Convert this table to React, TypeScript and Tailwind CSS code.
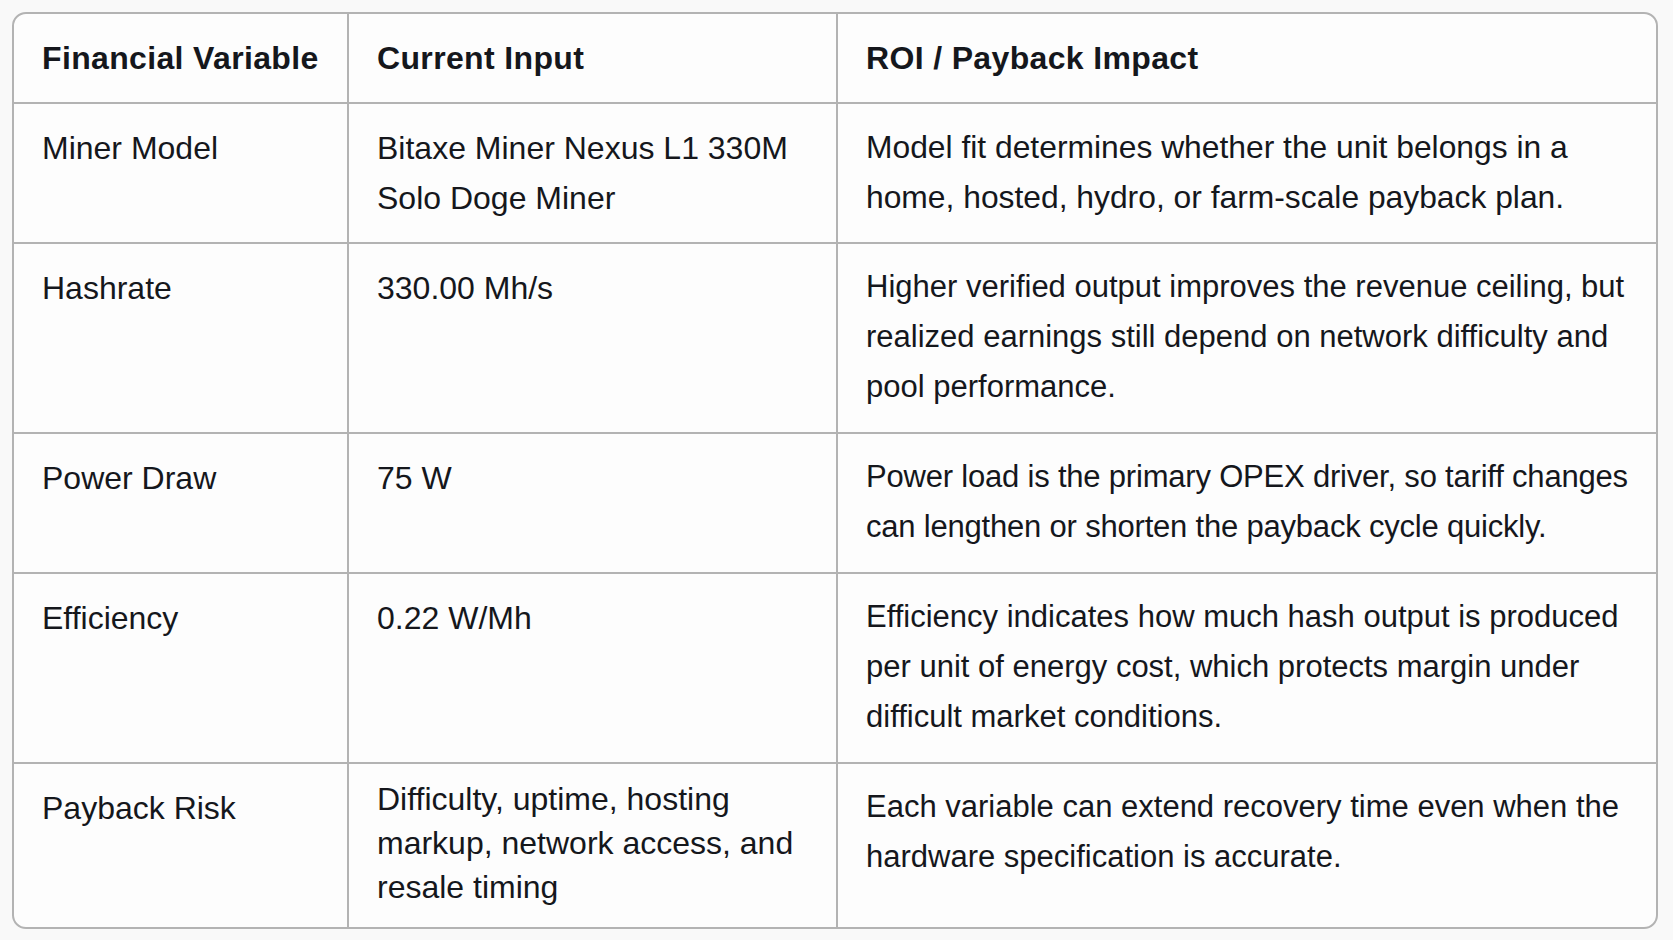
import React from "react";

type Row = {
  label: string;
  input: string[];
  impact: string[];
  inputTight?: boolean;
  impactSize?: string;
};

const rows: Row[] = [
  {
    label: "Miner Model",
    input: ["Bitaxe Miner Nexus L1 330M", "Solo Doge Miner"],
    impact: [
      "Model fit determines whether the unit belongs in a",
      "home, hosted, hydro, or farm-scale payback plan.",
    ],
    impactSize: "text-[31.8px]",
  },
  {
    label: "Hashrate",
    input: ["330.00 Mh/s"],
    impact: [
      "Higher verified output improves the revenue ceiling, but",
      "realized earnings still depend on network difficulty and",
      "pool performance.",
    ],
  },
  {
    label: "Power Draw",
    input: ["75 W"],
    impact: [
      "Power load is the primary OPEX driver, so tariff changes",
      "can lengthen or shorten the payback cycle quickly.",
    ],
    impactSize: "text-[31px] tracking-[-0.2px]",
  },
  {
    label: "Efficiency",
    input: ["0.22 W/Mh"],
    impact: [
      "Efficiency indicates how much hash output is produced",
      "per unit of energy cost, which protects margin under",
      "difficult market conditions.",
    ],
  },
  {
    label: "Payback Risk",
    input: ["Difficulty, uptime, hosting", "markup, network access, and", "resale timing"],
    inputTight: true,
    impact: [
      "Each variable can extend recovery time even when the",
      "hardware specification is accurate.",
    ],
  },
];

function Lines({ lines }: { lines: string[] }) {
  return (
    <>
      {lines.map((l) => (
        <span key={l} className="block whitespace-nowrap">
          {l}
        </span>
      ))}
    </>
  );
}

export default function App() {
  return (
    <div
      className="min-h-screen w-full bg-[#f9f9f9] p-[12px] text-[#15171c]"
      style={{ fontFamily: '"Liberation Sans", Arial, sans-serif' }}
    >
      <div className="w-[1646px] overflow-hidden rounded-[14px] border-2 border-[#b3b3b3] bg-[#fdfdfd]">
        {/* header */}
        <div className="grid grid-cols-[335px_489px_1fr] whitespace-nowrap border-b-2 border-[#b3b3b3] text-[32px] font-bold leading-[50px] tracking-[0.35px]">
          <div className="border-r-2 border-[#b3b3b3] px-[28px] py-[19px]">Financial Variable</div>
          <div className="border-r-2 border-[#b3b3b3] px-[28px] py-[19px]">Current Input</div>
          <div className="px-[28px] py-[19px]">ROI / Payback Impact</div>
        </div>

        {rows.map((r, i) => (
          <div
            key={r.label}
            className={
              "grid grid-cols-[335px_489px_1fr] " +
              (i < rows.length - 1 ? "border-b-2 border-[#b3b3b3]" : "")
            }
          >
            <div className="border-r-2 border-[#b3b3b3] px-[28px] py-[19px] text-[32px] leading-[50px]">
              {r.label}
            </div>
            <div
              className={
                "border-r-2 border-[#b3b3b3] px-[28px] text-[32px] " +
                (r.inputTight ? "pt-[13px] pb-[18px] leading-[44px]" : "py-[19px] leading-[50px]")
              }
            >
              <Lines lines={r.input} />
            </div>
            <div className={"px-[28px] pt-[18px] pb-[20px] leading-[50px] " + (r.impactSize ?? "text-[31px]")}>
              <Lines lines={r.impact} />
            </div>
          </div>
        ))}
      </div>
    </div>
  );
}
